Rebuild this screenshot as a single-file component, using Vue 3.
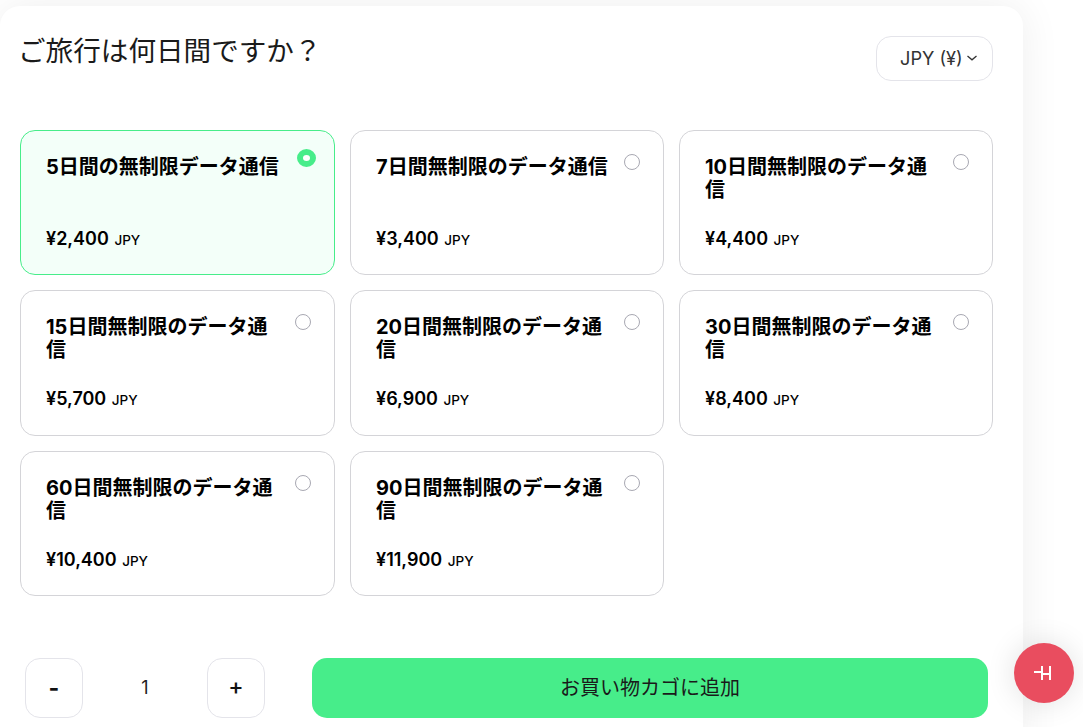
<script setup>
const plans = [
  { title: '5日間の無制限データ通信', price: '¥2,400', selected: true },
  { title: '7日間無制限のデータ通信', price: '¥3,400' },
  { title: '10日間無制限のデータ通信', price: '¥4,400' },
  { title: '15日間無制限のデータ通信', price: '¥5,700' },
  { title: '20日間無制限のデータ通信', price: '¥6,900' },
  { title: '30日間無制限のデータ通信', price: '¥8,400' },
  { title: '60日間無制限のデータ通信', price: '¥10,400' },
  { title: '90日間無制限のデータ通信', price: '¥11,900' }
]
</script>

<template>
  <div class="page">
    <main class="panel">
      <header class="head">
        <h1 class="heading">ご旅行は何日間ですか？</h1>
        <button class="currency" type="button">
          <span>JPY (¥)</span>
          <svg width="10" height="6" viewBox="0 0 10 6" fill="none" aria-hidden="true">
            <path d="M.5 1l4.500 3.800L9.500 1" stroke="#333" stroke-width="1.3" />
          </svg>
        </button>
      </header>

      <section class="grid">
        <article v-for="plan in plans" :key="plan.title" class="plan" :class="{ selected: plan.selected }">
          <h2 class="plan-title">{{ plan.title }}</h2>
          <p class="plan-price">{{ plan.price }} <small>JPY</small></p>
          <span class="radio"></span>
        </article>
      </section>

      <footer class="actions">
        <div class="stepper">
          <button class="step minus" type="button">-</button>
          <span class="qty">1</span>
          <button class="step" type="button">+</button>
        </div>
        <button class="add" type="button">お買い物カゴに追加</button>
      </footer>
    </main>

    <button class="fab" type="button" aria-label="Help">
      <svg width="20" height="14" viewBox="0 0 20 14" fill="none" aria-hidden="true">
        <path d="M0 6h9M8 0v14M16 0v14M8 8h8" stroke="#fff" stroke-width="2" />
      </svg>
    </button>
  </div>
</template>

<style>
html, body { margin: 0; overflow: hidden; background: #fff; }
</style>

<style scoped>
.page {
  position: relative;
  width: 1083px;
  height: 727px;
  overflow: hidden;
  padding-top: 6px;
  box-sizing: border-box;
  font-family: Inter, "Noto Sans CJK JP", sans-serif;
  color: #111;
}
.panel {
  width: 1023px;
  height: 760px;
  box-sizing: border-box;
  padding: 0 30px 0 20px;
  background: #fff;
  border-radius: 20px;
  box-shadow: 0 0 40px rgba(0, 0, 0, 0.07);
}
.head {
  display: flex;
  justify-content: space-between;
  align-items: flex-start;
  height: 124px;
}
.heading {
  margin: 25px 0 0 -2px;
  font-size: 27.6px;
  line-height: 40px;
  font-weight: 400;
  color: #1a1a1a;
}
.currency {
  display: flex;
  align-items: center;
  gap: 4px;
  width: 117px;
  height: 45px;
  margin-top: 30px;
  padding: 0 0 2px 23px;
  box-sizing: border-box;
  background: #fff;
  border: 1px solid #e4e4ea;
  border-radius: 15px;
  font: inherit;
  font-size: 18.200px;
  color: #333;
}
.grid {
  display: grid;
  grid-template-columns: 315px 314px 314px;
  grid-template-rows: 145px 146px 145px;
  gap: 15px;
}
.plan {
  position: relative;
  display: flex;
  flex-direction: column;
  padding: 25px 50px 0 25px;
  box-sizing: border-box;
  min-width: 0;
  border: 1px solid #d4d4d8;
  border-radius: 15px;
  background: #fff;
}
.plan.selected {
  background: #f3fff9;
  border-color: #47ed8a;
}
.plan-title {
  height: 46px;
  margin: 0;
  font-size: 20px;
  line-height: 23px;
  font-weight: 700;
  color: #000;
}
.plan-price {
  margin: 25px 0 0;
  font-size: 18px;
  line-height: 24px;
  font-weight: 600;
  color: #000;
}
.plan-price small {
  font-size: 13.500px;
  font-weight: 500;
  margin-left: 1px;
}
.radio {
  position: absolute;
  top: 23px;
  right: 23px;
  width: 16px;
  height: 16px;
  box-sizing: border-box;
  border: 1px solid #a8a8b2;
  border-radius: 50%;
  background: #fff;
}
.selected .radio {
  top: 18px;
  right: 18px;
  width: 19px;
  height: 18px;
  border: 6px solid #47ed8a;
}
.actions {
  display: flex;
  align-items: center;
  justify-content: space-between;
  margin-top: 62px;
  padding: 0 5px;
}
.stepper {
  display: flex;
  align-items: center;
  width: 240px;
  justify-content: space-between;
}
.step {
  width: 58px;
  height: 60px;
  padding: 0 0 3px;
  background: #fff;
  border: 1px solid #e4e4ea;
  border-radius: 15px;
  font: inherit;
  font-size: 23px;
  font-weight: 500;
  color: #111;
}
.minus { font-weight: 700; padding-bottom: 1px; }
.qty {
  margin-top: -2px;
  font-size: 18px;
  color: #222;
}
.add {
  width: 676px;
  height: 60px;
  padding: 0 0 3px;
  background: #47ed8a;
  border: 0;
  border-radius: 15px;
  font: inherit;
  font-size: 20px;
  color: #1a1a1a;
}
.fab {
  position: absolute;
  left: 1014px;
  top: 643px;
  display: flex;
  align-items: center;
  justify-content: center;
  width: 60px;
  height: 60px;
  padding: 0;
  border: 0;
  border-radius: 50%;
  background: #e94d5f;
  box-shadow: 0 0 30px rgba(0, 0, 0, 0.12);
}
</style>
